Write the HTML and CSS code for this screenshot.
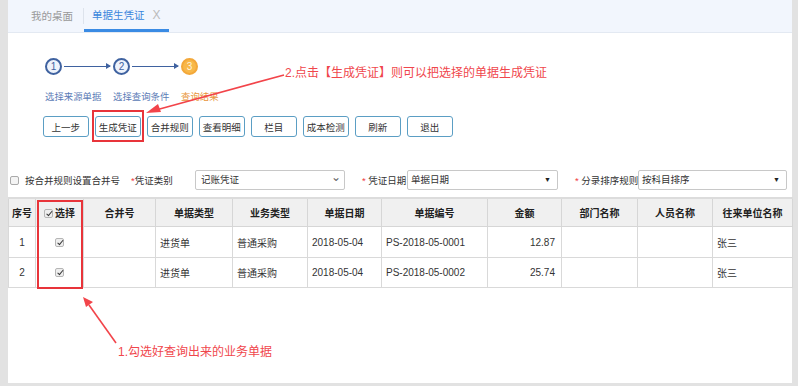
FILE: index.html
```html
<!DOCTYPE html>
<html lang="zh-CN">
<head>
    <meta charset="UTF-8">
    <title>单据生凭证</title>
    <link rel="stylesheet" href="styles.css">
</head>
<body>
    <div class="page">
        <div class="tabs">
            <div class="tab">我的桌面</div>
            <div class="sep"></div>
            <div class="tab active">单据生凭证 <span class="close">X</span></div>
        </div>

        <div class="steps">
            <div class="step">
                <div class="top"><span class="circle">1</span><span class="line"></span></div>
                <div class="slabel">选择来源单据</div>
            </div>
            <div class="step">
                <div class="top"><span class="circle">2</span><span class="line"></span></div>
                <div class="slabel">选择查询条件</div>
            </div>
            <div class="step now">
                <div class="top"><span class="circle">3</span></div>
                <div class="slabel">查询结果</div>
            </div>
        </div>

        <div class="toolbar">
            <button>上一步</button>
            <button>生成凭证</button>
            <button>合并规则</button>
            <button>查看明细</button>
            <button>栏目</button>
            <button>成本检测</button>
            <button>刷新</button>
            <button>退出</button>
        </div>

        <div class="filters">
            <span class="cb"></span>
            <span class="merge">按合并规则设置合并号</span>
            <span class="flabel f1"><i>*</i>凭证类别</span>
            <div class="sel s1">记账凭证<span class="chev">&#8964;</span></div>
            <span class="flabel f2"><i>*</i> 凭证日期</span>
            <div class="sel s2">单据日期<span class="tri">&#9660;</span></div>
            <span class="flabel f3"><i>*</i> 分录排序规则</span>
            <div class="sel s3">按科目排序<span class="tri">&#9660;</span></div>
        </div>

        <table class="grid">
            <colgroup>
                <col style="width:27px"><col style="width:48px"><col style="width:72px">
                <col style="width:77px"><col style="width:75px"><col style="width:74px">
                <col style="width:106px"><col style="width:74px"><col style="width:76px">
                <col style="width:75px"><col style="width:80px">
            </colgroup>
            <thead>
                <tr>
                    <th>序号</th>
                    <th><span class="ck"></span>选择</th>
                    <th>合并号</th>
                    <th>单据类型</th>
                    <th>业务类型</th>
                    <th>单据日期</th>
                    <th>单据编号</th>
                    <th>金额</th>
                    <th>部门名称</th>
                    <th>人员名称</th>
                    <th>往来单位名称</th>
                </tr>
            </thead>
            <tbody>
                <tr>
                    <td class="c">1</td>
                    <td class="c"><span class="ck"></span></td>
                    <td></td>
                    <td>进货单</td>
                    <td>普通采购</td>
                    <td>2018-05-04</td>
                    <td>PS-2018-05-0001</td>
                    <td class="r">12.87</td>
                    <td></td>
                    <td></td>
                    <td>张三</td>
                </tr>
                <tr class="r2">
                    <td class="c">2</td>
                    <td class="c"><span class="ck"></span></td>
                    <td></td>
                    <td>进货单</td>
                    <td>普通采购</td>
                    <td>2018-05-04</td>
                    <td>PS-2018-05-0002</td>
                    <td class="r">25.74</td>
                    <td></td>
                    <td></td>
                    <td>张三</td>
                </tr>
            </tbody>
        </table>
    </div>

    <!-- 标注 -->
    <div class="mark m1"></div>
    <div class="mark m2"></div>
    <div class="note n1">2.点击【生成凭证】则可以把选择的单据生成凭证</div>
    <div class="note n2">1.勾选好查询出来的业务单据</div>
    <svg class="arrows" width="798" height="386" viewBox="0 0 798 386">
        <line x1="284" y1="75" x2="156" y2="110" stroke="#f2444a" stroke-width="1.6"/>
        <polygon points="146,113 158,104 161,112" fill="#f2444a"/>
        <line x1="116" y1="343" x2="89" y2="305" stroke="#f2444a" stroke-width="1.6"/>
        <polygon points="83,297 93,302 86,307" fill="#f2444a"/>
    </svg>
</body>
</html>
```

FILE: styles.css
```css
body { margin: 0; background: #e2e2e2; font-family: "Liberation Sans", "Noto Sans CJK SC", sans-serif; color: #333; position: relative; width: 798px; height: 386px; overflow: hidden; }
.page { margin-left: 8px; width: 784px; height: 383px; background: #fff; }

.tabs { height: 32px; background: #f2f6fd; border-bottom: 1px solid #e3e9f2; display: flex; align-items: center; padding-left: 23px; }
.tab { font-size: 10.5px; line-height: 32px; height: 32px; box-sizing: border-box; color: #999; padding-right: 10px; }
.tab.active { color: #3a86dc; padding: 0 9px 0 8px; border-bottom: 3px solid #3a8be4; line-height: 31px; }
.tab .close { color: #bbb; font-size: 12px; margin-left: 5px; }
.sep { width: 1px; height: 16px; background: #dde3ec; }

.steps { display: flex; padding: 25px 0 0 37px; height: 52px; }
.step { width: 68px; }
.step .top { display: flex; align-items: center; height: 17px; }
.circle { width: 17px; height: 17px; box-sizing: border-box; border-radius: 50%; border: 2px solid #3f62a0; background: #eef3fb; color: #3f62a0; font-size: 10px; line-height: 13px; text-align: center; }
.line { position: relative; width: 46px; height: 1.5px; background: #3f62a0; margin-left: 2px; }
.line::after { content: ""; position: absolute; right: -1px; top: -3px; border-left: 5px solid #3f62a0; border-top: 3.5px solid transparent; border-bottom: 3.5px solid transparent; }
.now .circle { background: #f8b84a; border-color: #f3a83a; color: #fff4dc; }
.slabel { font-size: 9.4px; line-height: 12px; margin-top: 16px; color: #5b7bb6; white-space: nowrap; }
.now .slabel { color: #e8953a; }

.toolbar { display: flex; gap: 6.5px; padding-left: 35px; margin-top: 6px; }
button { width: 45.5px; height: 21px; padding: 0; background: #fff; border: 1.5px solid #5b9ec4; border-radius: 3px; font-family: inherit; font-size: 9.5px; color: #333; }

.filters { display: flex; align-items: center; height: 20px; margin-top: 33px; font-size: 9.5px; white-space: nowrap; }
.filters i { color: #f04040; font-style: normal; }
.cb { width: 9px; height: 9px; box-sizing: border-box; border: 1px solid #aaa; border-radius: 2px; background: #f4f4f4; margin-left: 2px; }
.merge { margin-left: 6px; width: 106px; }
.flabel.f1 { width: 64px; }
.flabel.f2 { width: 45px; margin-left: 17px; }
.flabel.f3 { width: 63px; margin-left: 17px; }
.sel { position: relative; height: 20px; box-sizing: border-box; border: 1px solid #c8c8c8; border-radius: 2px; background: #fff; padding-left: 3px; line-height: 18px; font-size: 9.5px; }
.s1 { width: 150px; padding-left: 5px; }
.s2 { width: 151px; }
.s3 { width: 149px; }
.chev { position: absolute; right: 3px; top: -3px; color: #666; font-size: 12px; }
.tri { position: absolute; right: 6px; top: 0; font-size: 7px; color: #222; }

.grid { margin-top: 7px; width: 784px; table-layout: fixed; border-collapse: collapse; border-top: 2px solid #dcdcdc; font-size: 10px; }
.grid th { height: 27px; background: #f0f0f0; border: 1px solid #d6d6d6; font-weight: bold; color: #222; padding: 0; }
.grid td { height: 30px; border: 1px solid #d9d9d9; padding: 0 0 0 4px; white-space: nowrap; }
.grid .r2 td { height: 29px; }
.grid td.c { text-align: center; padding: 0; }
.grid td.r { text-align: right; padding: 0 6px 0 0; }
.ck { display: inline-block; width: 9px; height: 9px; box-sizing: border-box; border: 1px solid #b5b5b5; border-radius: 2px; background: #eee; position: relative; vertical-align: -1px; margin-right: 2px; }
.ck::after { content: ""; position: absolute; left: 2.5px; top: 0; width: 2px; height: 4.5px; border-right: 1.5px solid #333; border-bottom: 1.5px solid #333; transform: rotate(40deg); }
td .ck { margin-right: 0; }

.mark { position: absolute; border: 2px solid #e8343a; box-sizing: border-box; }
.m1 { left: 92px; top: 110px; width: 52px; height: 32px; }
.m2 { left: 37px; top: 200px; width: 46px; height: 89px; }
.note { position: absolute; font-size: 12px; line-height: 16px; color: #f0464c; white-space: nowrap; }
.n1 { left: 285px; top: 65px; }
.n2 { left: 118px; top: 344px; }
.arrows { position: absolute; left: 0; top: 0; pointer-events: none; }
```
